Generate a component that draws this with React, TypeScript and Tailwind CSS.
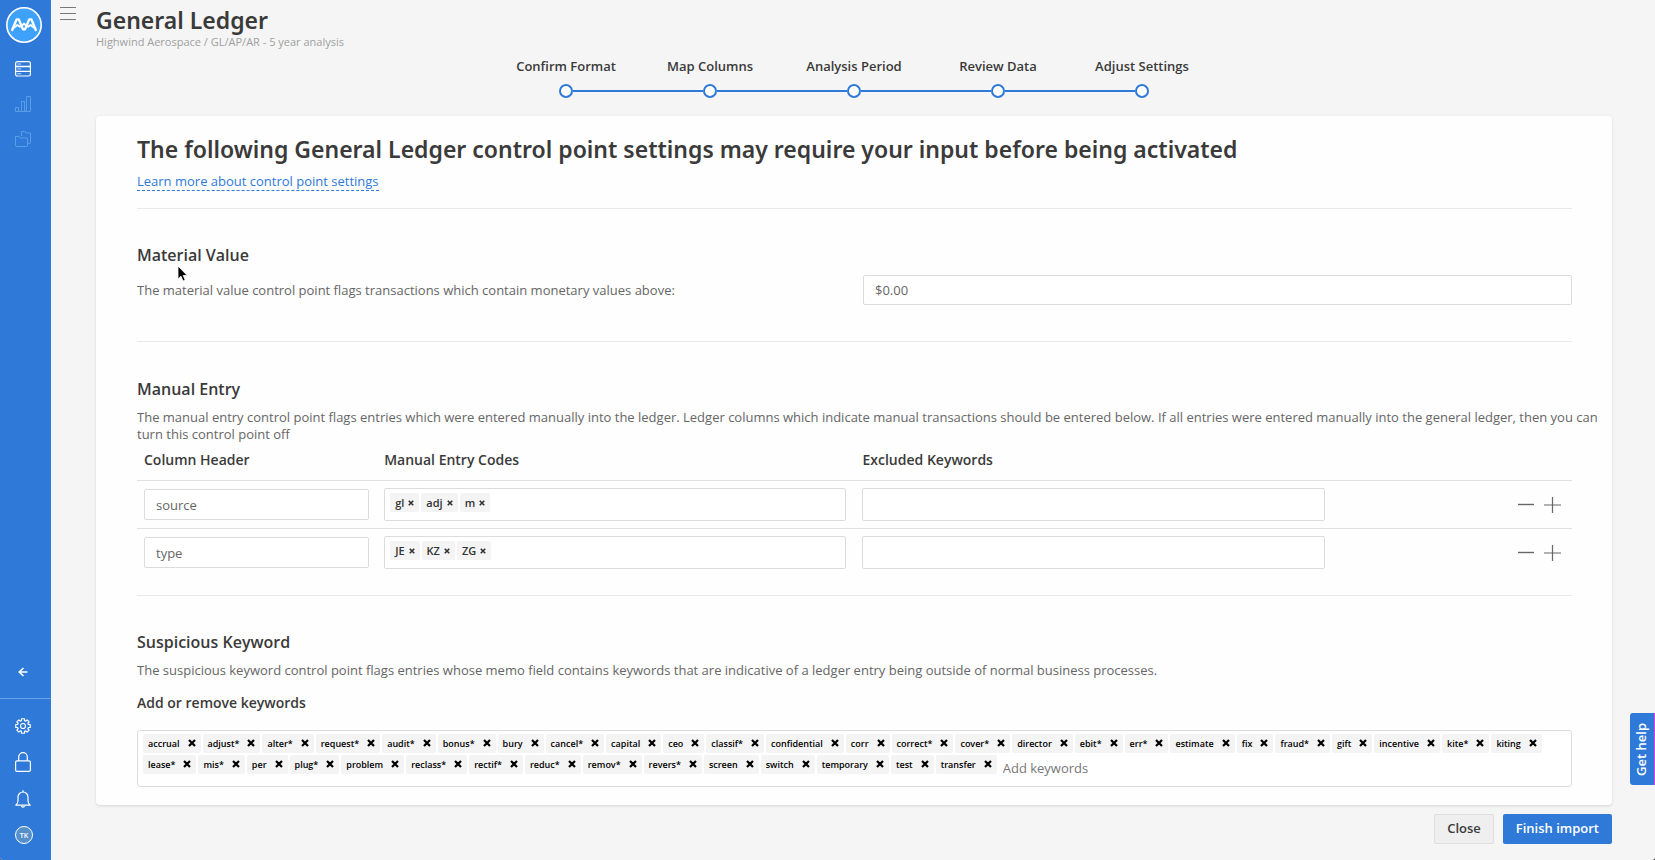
import React from "react";

const steps = ["Confirm Format", "Map Columns", "Analysis Period", "Review Data", "Adjust Settings"];

const entryRows = [
  { header: "source", codes: ["gl", "adj", "m"] },
  { header: "type", codes: ["JE", "KZ", "ZG"] },
];

const keywords =
  "accrual adjust* alter* request* audit* bonus* bury cancel* capital ceo classif* confidential corr correct* cover* director ebit* err* estimate fix fraud* gift incentive kite* kiting lease* mis* per plug* problem reclass* rectif* reduc* remov* revers* screen switch temporary test transfer".split(
    " ",
  );

// Outline of an eight-toothed cog centred on (8, 8).
const cogPath = (() => {
  const points: string[] = [];
  for (let i = 0; i < 8; i++) {
    const mid = (i * Math.PI) / 4;
    const corners: [number, number][] = [
      [-0.27, 5.6],
      [-0.2, 7.4],
      [0.2, 7.4],
      [0.27, 5.6],
    ];
    for (const [offset, radius] of corners) {
      points.push(
        `${(8 + radius * Math.sin(mid + offset)).toFixed(2)} ${(8 - radius * Math.cos(mid + offset)).toFixed(2)}`,
      );
    }
  }
  return `M${points.join("L")}Z`;
})();

function Cross({ className }: { className: string }) {
  return (
    <svg viewBox="0 0 8 8" className={className} stroke="currentColor" strokeWidth="2.2" aria-hidden="true">
      <path d="M1 1l6 6M7 1 1 7" />
    </svg>
  );
}

function Logo() {
  return (
    <svg viewBox="0 0 36 36" className="size-9" aria-hidden="true">
      <circle cx="18" cy="18" r="17.2" fill="#3ea2fb" stroke="#fff" strokeWidth="1.6" />
      <path
        d="M6.200 23 10.600 12.400h2.200L17 22.400h2L23.200 12.400h2.200L29.800 23"
        fill="none"
        stroke="#fff"
        strokeWidth="2.400"
        strokeLinejoin="round"
        strokeLinecap="round"
      />
      <path
        d="M8.200 20.600 11.400 18l2.600 1.800M15.600 19 18 16.600l2.400 2.400M22 19.800l2.600-1.800 3.200 2.600"
        fill="none"
        stroke="#fff"
        strokeWidth="1.900"
        strokeLinecap="round"
        strokeLinejoin="round"
      />
    </svg>
  );
}

function Sidebar() {
  const link = "flex items-center justify-center";
  return (
    <nav aria-label="Main" className="flex w-[51px] shrink-0 flex-col items-center bg-[#2f79d8] pt-[7px] text-white">
      <div className="flex w-full flex-1 flex-col items-center pr-[5px]">
        <a href="#home" aria-label="Home" className="ml-0.5">
          <Logo />
        </a>
        <a href="#data" aria-label="Data" className={`${link} mt-[17px] h-[18px]`}>
          <svg viewBox="0 0 16 16" className="size-4" fill="none" stroke="currentColor" aria-hidden="true">
            <rect x=".6" y=".6" width="14.800" height="14.400" rx="1.800" strokeWidth="1.2" />
            <path d="M.5 5.500h15M.5 10.300h15" strokeWidth="1.300" />
            <path d="M2.200 3h4M2.200 7.900h4M2.200 12.700h4" strokeWidth="1" opacity=".7" />
          </svg>
        </a>
        <a href="#analysis" aria-label="Analysis" className={`${link} mt-[17px] h-[18px] text-[#5a9fe6]`}>
          <svg viewBox="0 0 16 16" className="size-4" fill="none" stroke="currentColor" strokeLinejoin="round" aria-hidden="true">
            <path d="M.5 15.500v-4h3v4zM6.500 15.500V5.500h3v10zM11.500 15.500V.5h4v15zM3.500 15.500h8" />
          </svg>
        </a>
        <a href="#files" aria-label="Files" className={`${link} mt-[17px] h-[18px] text-[#5a9fe6]`}>
          <svg viewBox="0 0 16 16" className="size-4" fill="none" stroke="currentColor" strokeLinejoin="round" aria-hidden="true">
            <path d="M.5 14.500v-9h3.600l1.200 1.500h7.200v7.500a1 1 0 0 1-1 1h-10a1 1 0 0 1-1-1z" />
            <path d="M6.500 5V.5h3.300l1 1.500h4.700v9.500a1 1 0 0 1-1 1h-2" />
          </svg>
        </a>
        <button type="button" aria-label="Collapse" className="mt-auto mb-5">
          <svg viewBox="0 0 10 12" className="h-3 w-2.5" fill="none" stroke="currentColor" strokeWidth="1.600" aria-hidden="true">
            <path d="M5.500 2 1.200 6l4.300 4M1.200 6h8.300" />
          </svg>
        </button>
      </div>
      <div className="flex w-full flex-col items-center border-t border-[#66a3e8] pt-[19px] pr-[5px] pb-4">
        <a href="#settings" aria-label="Settings">
          <svg viewBox="0 0 16 16" className="size-4" fill="none" stroke="currentColor" strokeWidth="1.200" strokeLinejoin="round" aria-hidden="true">
            <path d={cogPath} />
            <circle cx="8" cy="8" r="2.500" />
          </svg>
        </a>
        <a href="#security" aria-label="Security" className="mt-[18px]">
          <svg viewBox="0 0 16 20" className="h-5 w-4" fill="none" stroke="currentColor" strokeWidth="1.200" aria-hidden="true">
            <rect x=".6" y="8.800" width="14.800" height="10.600" rx="1.400" />
            <path d="M3.700 8.800V4.900a4.300 4.300 0 0 1 8.600 0v3.900" />
          </svg>
        </a>
        <a href="#notifications" aria-label="Notifications" className="mt-[18px]">
          <svg viewBox="0 0 16 18" className="h-[18px] w-4" fill="none" stroke="currentColor" strokeWidth="1.200" strokeLinejoin="round" strokeLinecap="round" aria-hidden="true">
            <path d="M.8 15.200c1.600-1.400 2.200-2.600 2.200-4.800V7a5 5 0 0 1 10 0v3.400c0 2.200.600 3.400 2.200 4.800z" />
            <path d="M8 .6v1.200M6.600 16.600q1.400 1 2.800 0" />
          </svg>
        </a>
        <a
          href="#account"
          aria-label="Account"
          className="mt-[18px] ml-0.5 flex size-[18px] items-center justify-center rounded-full border border-white bg-[#5590cb] text-[7px] leading-none font-semibold"
        >
          TK
        </a>
      </div>
    </nav>
  );
}

function Stepper() {
  return (
    <ol className="mx-auto flex justify-center">
      {steps.map((step, index) => (
        <li key={step} className="w-36 text-center text-[13px] leading-[18px] font-semibold text-[#3a3a3a]">
          {step}
          <div className="mt-[9px] flex items-center">
            <span className={`h-0.5 flex-1 ${index === 0 ? "" : "bg-[#2f79d8]"}`} />
            <span className="size-3.5 rounded-full border-2 border-[#2f79d8] bg-white" />
            <span className={`h-0.5 flex-1 ${index === steps.length - 1 ? "" : "bg-[#2f79d8]"}`} />
          </div>
        </li>
      ))}
    </ol>
  );
}

function CodeField({ label, codes }: { label: string; codes: string[] }) {
  return (
    <div className="flex h-[33px] items-start gap-0.5 rounded-xs border border-[#dcdcdc] bg-white px-[5px] pt-1">
      {codes.map((code) => (
        <span
          key={code}
          className="flex h-[19px] items-center gap-1 rounded-xs bg-[#f4f4f4] px-[5px] text-[11px] leading-none font-semibold text-[#333]"
        >
          {code}
          <button type="button" aria-label={`Remove ${code}`}>
            <Cross className="size-1.5" />
          </button>
        </span>
      ))}
      <input aria-label={label} className="h-[19px] min-w-0 flex-1 text-[13px] outline-none" />
    </div>
  );
}

function ManualEntryTable() {
  const heading = "px-2 pb-2.5 text-left text-[14px] leading-5 font-semibold first:px-[7px]";
  return (
    <table className="mt-[7px] w-full table-fixed border-collapse">
      <colgroup>
        <col className="w-1/6" />
        <col className="w-1/3" />
        <col className="w-1/3" />
        <col className="w-1/6" />
      </colgroup>
      <thead>
        <tr>
          <th scope="col" className={heading}>
            Column Header
          </th>
          <th scope="col" className={heading}>
            Manual Entry Codes
          </th>
          <th scope="col" className={heading}>
            Excluded Keywords
          </th>
          <td />
        </tr>
      </thead>
      <tbody>
        {entryRows.map((row) => (
          <tr key={row.header} className="h-12 border-t border-[#e0e0e0]">
            <td className="px-[7px]">
              <input
                aria-label="Column header"
                defaultValue={row.header}
                className="block h-[31px] w-full rounded-xs border border-[#dcdcdc] bg-white px-[11px] text-[13px] text-[#666]"
              />
            </td>
            <td className="px-2">
              <CodeField label={`Manual entry codes for ${row.header}`} codes={row.codes} />
            </td>
            <td className="px-2">
              <CodeField label={`Excluded keywords for ${row.header}`} codes={[]} />
            </td>
            <td className="pr-[11px]">
              <div className="flex justify-end gap-2.5 text-[#666]">
                <button type="button" aria-label={`Remove ${row.header} row`}>
                  <svg viewBox="0 0 16 16" className="size-4" stroke="currentColor" aria-hidden="true">
                    <path d="M0 7.500h16" strokeWidth="1.400" />
                  </svg>
                </button>
                <button type="button" aria-label="Add row">
                  <svg viewBox="0 0 17 16" className="h-4 w-[17px]" stroke="currentColor" aria-hidden="true">
                    <path d="M0 8h17M8.500 0v16" strokeWidth="1.200" />
                  </svg>
                </button>
              </div>
            </td>
          </tr>
        ))}
      </tbody>
    </table>
  );
}

export default function App() {
  const sectionTitle = "text-[16px] leading-6 font-semibold text-[#3a3a3a]";
  const description = "text-[13px] leading-[17px] text-[#666]";
  return (
    <div className="flex min-h-screen bg-[#4a4a4a] font-['Open_Sans','Noto_Sans',sans-serif] text-[#3a3a3a]">
      <div className="flex flex-1 overflow-hidden rounded-b-[3px] bg-[#f5f5f5]">
        <Sidebar />
        <button type="button" aria-label="Toggle menu" className="mt-[7px] ml-[9px] flex h-[13px] w-4 shrink-0 flex-col justify-between">
          <span className="h-px w-full bg-[#777]" />
          <span className="h-px w-full bg-[#777]" />
          <span className="h-px w-full bg-[#777]" />
        </button>
        <main className="mr-[43px] ml-5 flex min-w-0 flex-1 flex-col">
          <header className="pt-[5px]">
            <h1 className="font-['Noto_Sans','Open_Sans',sans-serif] text-[23px] leading-[30px] font-semibold">General Ledger</h1>
            <p className="text-[11px] leading-[14px] text-[#a0a0a0]">Highwind Aerospace / GL/AP/AR - 5 year analysis</p>
          </header>
          <div className="mt-2">
            <Stepper />
          </div>

          <form className="mt-[18px]">
            <div className="rounded-[4px] bg-[#fefefe] pt-4 pr-10 pb-[18px] pl-[41px] shadow-[0_1px_3px_rgba(0,0,0,0.12)]">
              <h2 className="font-['Noto_Sans','Open_Sans',sans-serif] text-[23px] leading-[34px] font-semibold">
                The following General Ledger control point settings may require your input before being activated
              </h2>
              <a
                href="#learn"
                className="mt-[7px] inline-block border-b border-dashed border-[#2f79d8] text-[13px] leading-[17px] text-[#2f79d8]"
              >
                Learn more about control point settings
              </a>

              <section className="mt-4 border-t border-[#e9e9e9] pt-[34px] pb-9">
                <h3 className={sectionTitle}>Material Value</h3>
                <div className="mt-2 flex items-center">
                  <label htmlFor="material-value" className={`${description} flex-1`}>
                    The material value control point flags transactions which contain monetary values above:
                  </label>
                  <div className="w-[709px]">
                    <input
                      id="material-value"
                      defaultValue="$0.00"
                      className="block h-[30px] w-full rounded-xs border border-[#dcdcdc] bg-white px-[11px] text-[13px] text-[#666]"
                    />
                  </div>
                </div>
              </section>

              <section className="border-t border-[#e9e9e9] pt-[35px] pb-[18px]">
                <h3 className={sectionTitle}>Manual Entry</h3>
                <p className={`${description} mt-2 -mr-8`}>
                  The manual entry control point flags entries which were entered manually into the ledger. Ledger columns
                  which indicate manual transactions should be entered below. If all entries were entered manually into the
                  general ledger, then you can turn this control point off
                </p>
                <ManualEntryTable />
              </section>

              <section className="border-t border-[#e9e9e9] pt-[34px]">
                <h3 className={sectionTitle}>Suspicious Keyword</h3>
                <p className={`${description} mt-2`}>
                  The suspicious keyword control point flags entries whose memo field contains keywords that are indicative
                  of a ledger entry being outside of normal business processes.
                </p>
                <label htmlFor="keywords" className="mt-[14px] block text-[14px] leading-5 font-semibold">
                  Add or remove keywords
                </label>
                <div className="mt-[17px] flex min-h-[57px] flex-wrap content-start gap-0.5 rounded-[3px] border border-[#dcdcdc] bg-white px-[5px] pt-[3px]">
                  {keywords.map((word) => (
                    <span
                      key={word}
                      className="flex h-[19px] items-center gap-2 rounded-xs bg-[#f4f4f4] px-[5px] text-[9px] leading-none font-semibold text-black"
                    >
                      {word}
                      <button type="button" aria-label={`Remove ${word}`}>
                        <Cross className="size-2" />
                      </button>
                    </span>
                  ))}
                  <input
                    id="keywords"
                    placeholder="Add keywords"
                    className="ml-1 h-[27px] w-40 text-[13px] outline-none placeholder:text-[#777]"
                  />
                </div>
              </section>
            </div>

            <div className="mt-[9px] mb-4 flex justify-end gap-[9px] text-[13px] font-semibold">
              <button type="button" className="h-[30px] rounded-xs border border-[#dedede] bg-[#efefef] px-3 text-[#3a3a3a]">
                Close
              </button>
              <button type="submit" className="h-[30px] rounded-xs bg-[#2f79d8] px-[13px] text-white">
                Finish import
              </button>
            </div>
          </form>
        </main>
      </div>

      <button
        type="button"
        className="fixed right-0 bottom-[75px] flex h-[72px] w-[25px] items-center justify-center rounded-l-[3px] border-r border-[#d63fd6] bg-[#2f79d8] text-[13px] font-semibold text-white"
      >
        <span className="rotate-180 [writing-mode:vertical-rl]">Get help</span>
      </button>

      <svg viewBox="0 0 12 18" className="pointer-events-none absolute top-[265px] left-[177px] h-[18px] w-3" aria-hidden="true">
        <path d="M1 1v13l3-2.800 2 4.800 2.200-.900-2-4.600h4z" fill="#000" stroke="#fff" strokeWidth=".8" />
      </svg>
    </div>
  );
}
